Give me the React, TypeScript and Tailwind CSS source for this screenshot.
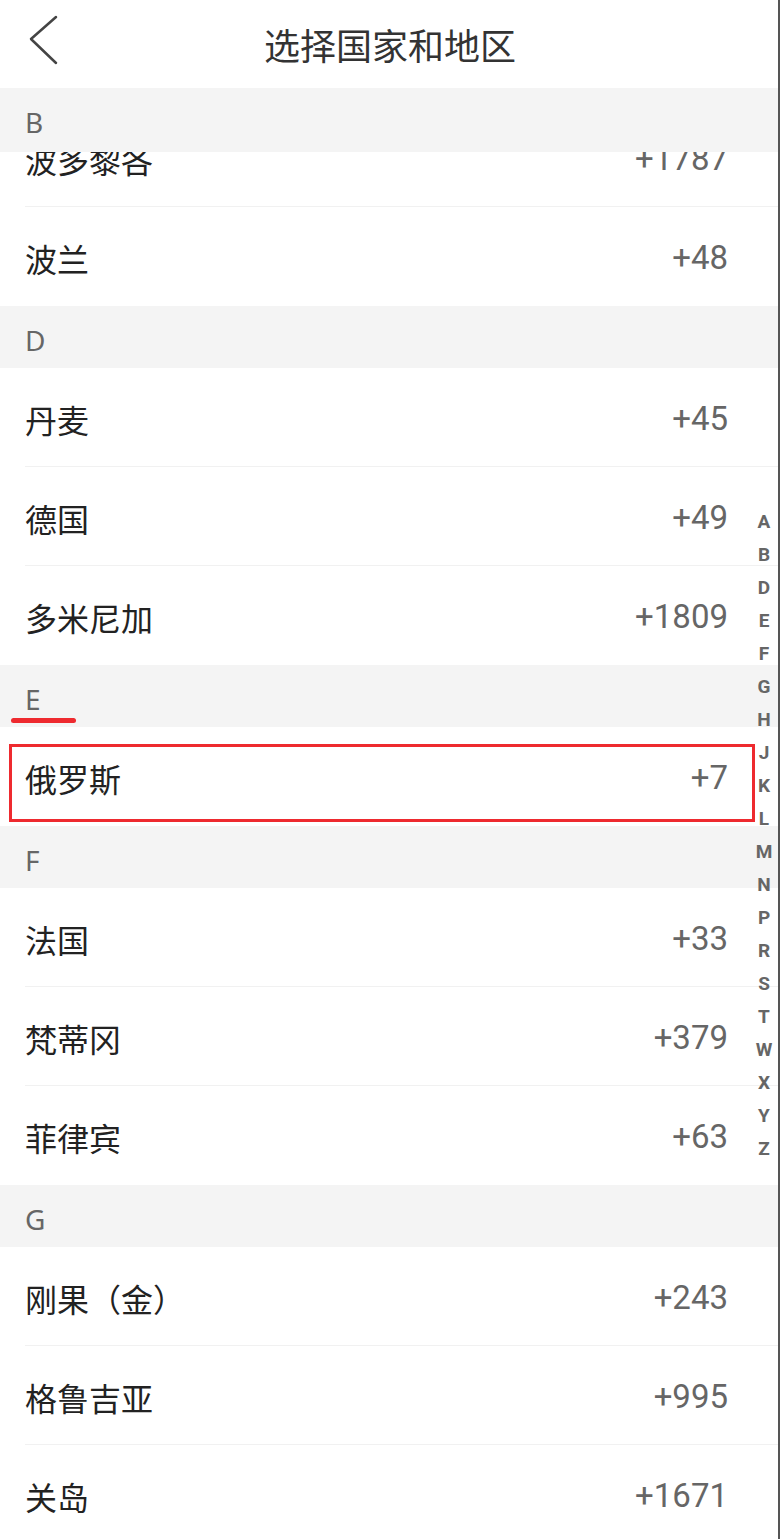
import React from "react";

type Row = { name: string; code: string };
type Section = { letter: string; rows: Row[] };

const sections: Section[] = [
  {
    letter: "B",
    rows: [
      { name: "波多黎各", code: "+1787" },
      { name: "波兰", code: "+48" },
    ],
  },
  {
    letter: "D",
    rows: [
      { name: "丹麦", code: "+45" },
      { name: "德国", code: "+49" },
      { name: "多米尼加", code: "+1809" },
    ],
  },
  { letter: "E", rows: [{ name: "俄罗斯", code: "+7" }] },
  {
    letter: "F",
    rows: [
      { name: "法国", code: "+33" },
      { name: "梵蒂冈", code: "+379" },
      { name: "菲律宾", code: "+63" },
    ],
  },
  {
    letter: "G",
    rows: [
      { name: "刚果（金）", code: "+243" },
      { name: "格鲁吉亚", code: "+995" },
      { name: "关岛", code: "+1671" },
    ],
  },
];

const index = "A B D E F G H J K L M N P R S T W X Y Z".split(" ");

const cjk = "font-['Noto_Sans_CJK_SC','Noto_Sans',sans-serif]";

function SectionHeader({ letter, marked }: { letter: string; marked?: boolean }) {
  return (
    <div className="relative h-[62px] bg-[#f4f4f4] flex items-center pl-[25px] pt-[6px]">
      <span className="text-[28px] leading-none text-[#666] font-['Noto_Sans',sans-serif]">
        {letter}
      </span>
      {marked && (
        <span className="absolute left-[11px] top-[53px] w-[65px] h-[5px] rounded-full bg-[#ee2a2f]" />
      )}
    </div>
  );
}

function CountryRow({ row, last, boxed }: { row: Row; last: boolean; boxed?: boolean }) {
  return (
    <div className="relative h-[99px] pl-[25px]">
      <div
        className={`h-full flex items-center justify-between pr-[52px] pt-[3px] ${
          last ? "" : "border-b border-[#f1f1f1]"
        }`}
      >
        <span className={`${cjk} text-[32px] text-[#222]`}>{row.name}</span>
        <span className="font-['Roboto',sans-serif] text-[33px] text-[#666]">{row.code}</span>
      </div>
      {boxed && (
        <div className="absolute left-[9px] top-[17px] w-[746px] h-[78px] border-[3px] border-[#ee2a2f]" />
      )}
    </div>
  );
}

export default function App() {
  return (
    <div className="relative w-[780px] h-[1539px] overflow-hidden bg-white">
      <div className="h-[88px] relative flex items-center justify-center">
        <svg
          className="absolute left-[26px] top-[14px]"
          width="36"
          height="54"
          viewBox="0 0 36 54"
          fill="none"
        >
          <path d="M30 3 L5 25 L30 49" stroke="#444" strokeWidth="2.5" strokeLinecap="round" strokeLinejoin="round" />
        </svg>
        <span className={`${cjk} text-[36px] text-[#333]`}>选择国家和地区</span>
      </div>

      <div className="relative h-[1451px] overflow-hidden">
        <div className="mt-[20px]">
          {sections.map((s, si) => (
            <div key={s.letter}>
              {si > 0 && <SectionHeader letter={s.letter} marked={s.letter === "E"} />}
              {s.rows.map((r, i) => (
                <CountryRow
                  key={r.name}
                  row={r}
                  last={i === s.rows.length - 1}
                  boxed={r.name === "俄罗斯"}
                />
              ))}
            </div>
          ))}
        </div>
        <div className="absolute left-0 right-0 top-0 h-[64px] bg-[#f4f4f4] flex items-center pl-[25px] pt-[4px]">
          <span className="text-[28px] leading-none text-[#666] font-['Noto_Sans',sans-serif]">B</span>
        </div>
      </div>

      <div className="absolute right-[6px] top-[506px] flex flex-col items-center w-[20px]">
        {index.map((l) => (
          <span
            key={l}
            className="h-[33px] flex items-center text-[19px] font-bold text-[#666] font-['Roboto',sans-serif]"
          >
            {l}
          </span>
        ))}
      </div>

      <div className="absolute right-0 top-0 bottom-0 w-[2px] bg-[#555]" />
    </div>
  );
}
